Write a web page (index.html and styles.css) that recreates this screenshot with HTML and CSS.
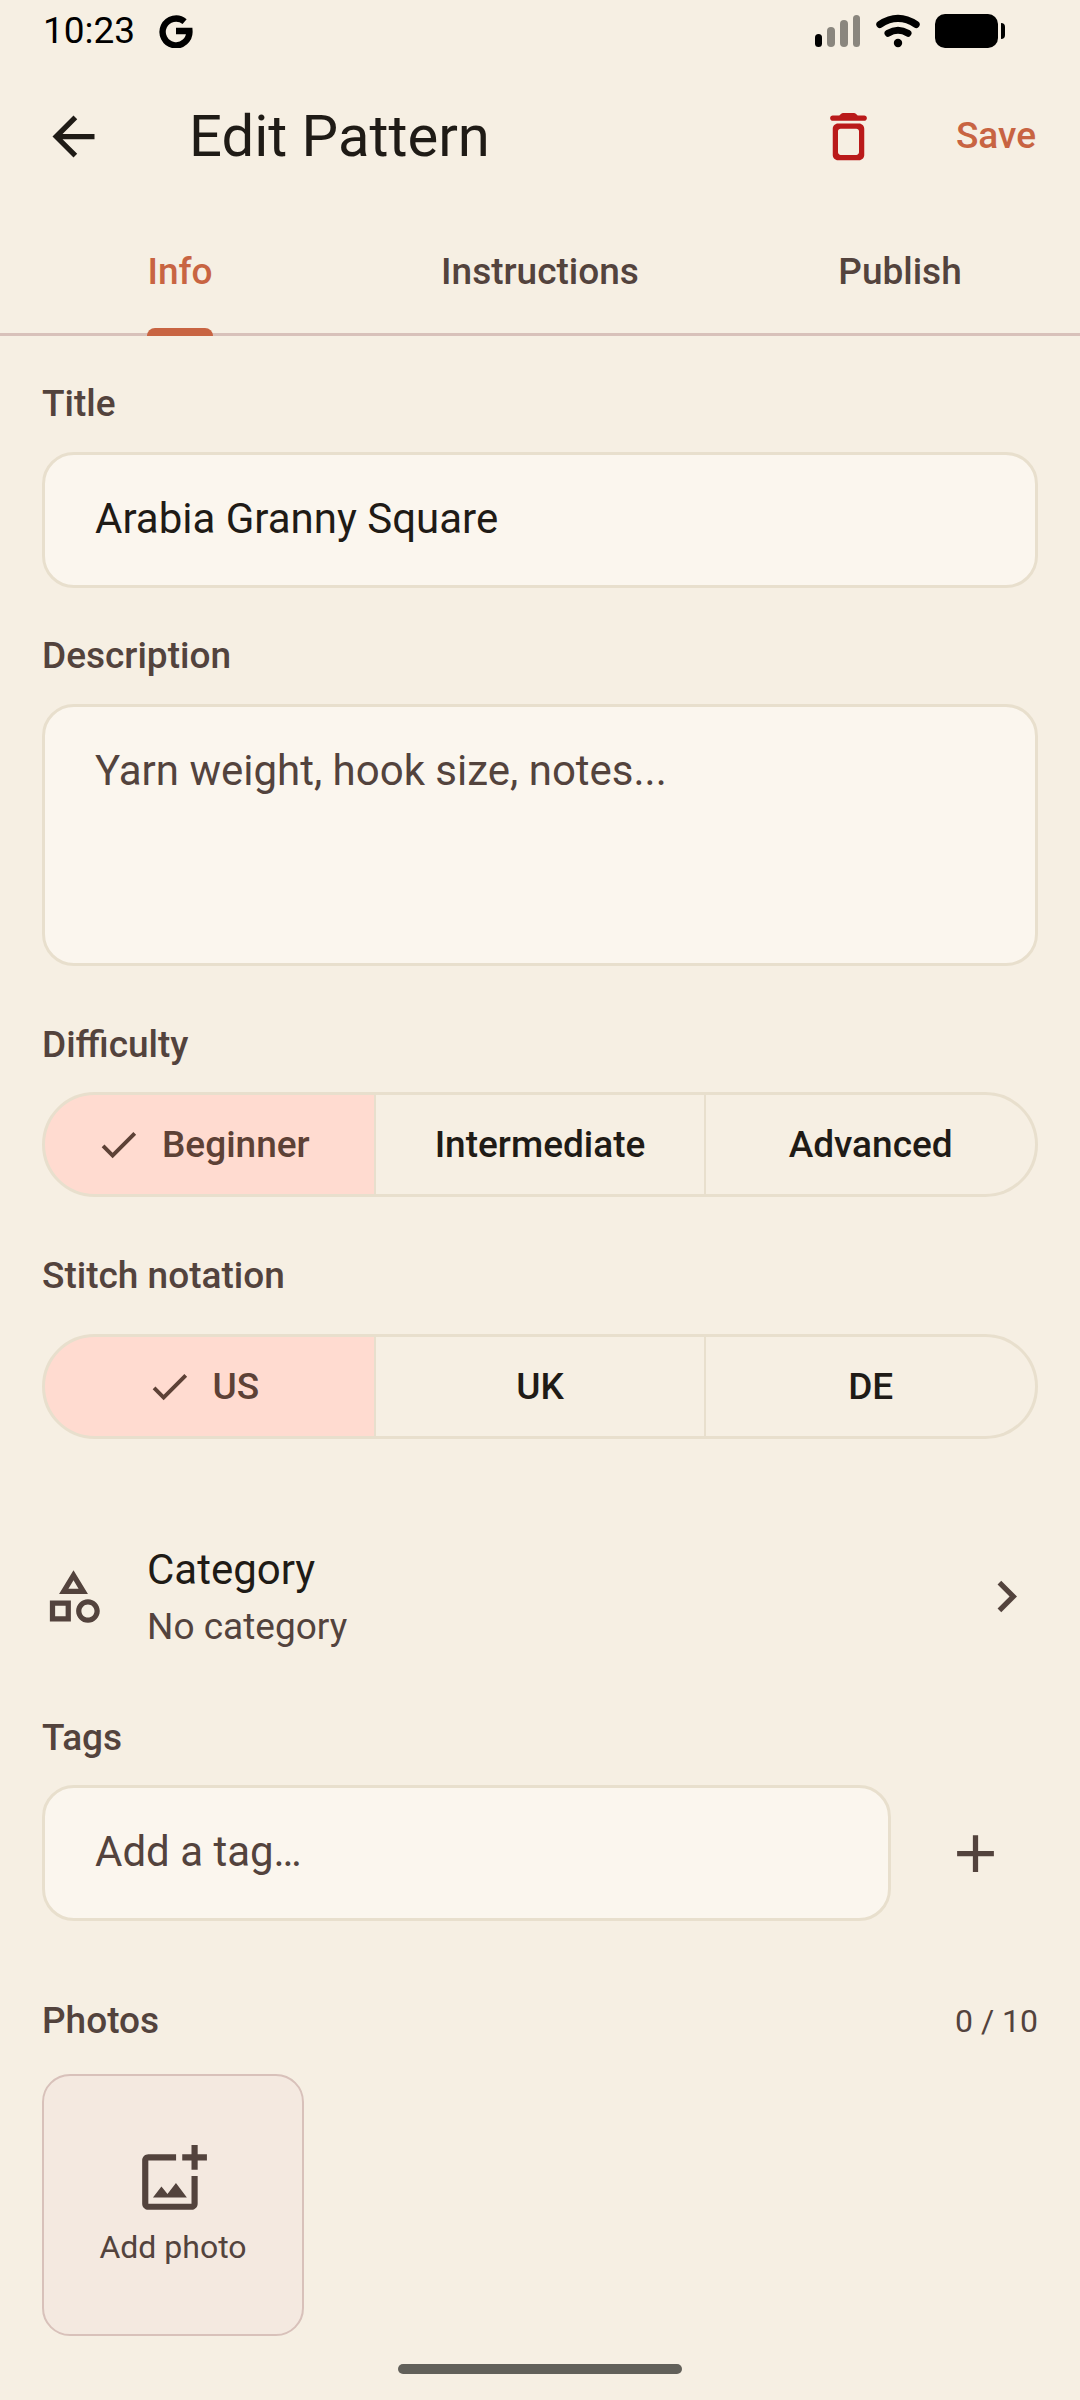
FILE: index.html
```html
<!DOCTYPE html>
<html lang="en">
<head>
<meta charset="utf-8">
<meta name="viewport" content="width=device-width, initial-scale=1">
<title>Edit Pattern</title>
<link rel="stylesheet" href="styles.css">
</head>
<body>
<div class="screen">
  <div class="status-bar">
    <span class="status-time">10:23</span>
    <svg class="status-g" viewBox="0 0 34 34" aria-hidden="true"><path d="M25.6 7.6A13.4 13.4 0 1 0 30.4 17H17" fill="none" stroke="#000" stroke-width="6.4"/></svg>
    <div class="status-icons">
      <svg class="signal" viewBox="0 0 46 34" aria-hidden="true">
        <rect x="0" y="20" width="7" height="13" rx="3.5"/>
        <g fill="#8a867e"><rect x="12" y="13" width="8" height="20" rx="4"/><rect x="25" y="6" width="8" height="27" rx="4"/><rect x="38" y="1" width="7" height="32" rx="3.5"/></g>
      </svg>
      <svg class="wifi" viewBox="0 0 44 34" aria-hidden="true">
        <path d="M3.8 10.5Q22 -1.8 40.2 10.5M12 19.2Q22 13.2 32 19.2" fill="none" stroke="#000" stroke-width="7" stroke-linecap="round"/>
        <circle cx="22" cy="29" r="4.2"/>
      </svg>
      <svg class="battery" viewBox="0 0 71 34" aria-hidden="true">
        <rect width="63" height="34" rx="10"/><path d="M66 9q4 0 4 4v8q0 4-4 4z"/>
      </svg>
    </div>
  </div>

  <header class="app-bar">
    <button class="icon-button" type="button" aria-label="Back">
      <svg class="icon" viewBox="0 0 24 24"><path d="M20 11H7.83l5.59-5.59L12 4l-8 8 8 8 1.41-1.41L7.83 13H20v-2z"/></svg>
    </button>
    <h1 class="app-title">Edit Pattern</h1>
    <button class="icon-button delete" type="button" aria-label="Delete">
      <svg class="icon" viewBox="0 0 24 24"><path fill-rule="evenodd" d="M6 19c0 1.100.9 2 2 2h8c1.100 0 2-.9 2-2V9c0-1.100-.9-2-2-2H8c-1.100 0-2 .9-2 2v10zM9 9h6c.55 0 1 .45 1 1v8c0 .55-.45 1-1 1H9c-.55 0-1-.45-1-1v-8c0-.55.45-1 1-1zM15.500 4l-.71-.71c-.18-.18-.44-.29-.7-.29H9.910c-.26 0-.52.11-.7.29L8.500 4H6c-.55 0-1 .45-1 1s.45 1 1 1h12c.55 0 1-.45 1-1s-.45-1-1-1h-2.500z"/></svg>
    </button>
    <button class="save" type="submit" form="pattern-form">Save</button>
  </header>

  <div class="tabs" role="tablist">
    <button class="tab" type="button" role="tab" aria-selected="true"><span class="tab-label">Info</span></button>
    <button class="tab" type="button" role="tab" aria-selected="false"><span class="tab-label">Instructions</span></button>
    <button class="tab" type="button" role="tab" aria-selected="false"><span class="tab-label">Publish</span></button>
  </div>

  <form class="form" id="pattern-form">
    <div class="group">
      <label class="label" for="title">Title</label>
      <input class="field" id="title" type="text" value="Arabia Granny Square">
    </div>

    <div class="group">
      <label class="label" for="description">Description</label>
      <textarea class="field field-area" id="description" placeholder="Yarn weight, hook size, notes..."></textarea>
    </div>

    <fieldset class="group group-choice">
      <legend class="label">Difficulty</legend>
      <div class="segments">
        <label class="segment"><input type="radio" name="difficulty" checked><svg class="check" viewBox="0 0 24 24" aria-hidden="true"><path d="M9 16.170L4.830 12l-1.420 1.410L9 19 21 7l-1.410-1.410z"/></svg>Beginner</label>
        <label class="segment"><input type="radio" name="difficulty"><svg class="check" viewBox="0 0 24 24" aria-hidden="true"><path d="M9 16.170L4.830 12l-1.420 1.410L9 19 21 7l-1.410-1.410z"/></svg>Intermediate</label>
        <label class="segment"><input type="radio" name="difficulty"><svg class="check" viewBox="0 0 24 24" aria-hidden="true"><path d="M9 16.170L4.830 12l-1.420 1.410L9 19 21 7l-1.410-1.410z"/></svg>Advanced</label>
      </div>
    </fieldset>

    <fieldset class="group group-choice group-notation">
      <legend class="label">Stitch notation</legend>
      <div class="segments">
        <label class="segment"><input type="radio" name="notation" checked><svg class="check" viewBox="0 0 24 24" aria-hidden="true"><path d="M9 16.170L4.830 12l-1.420 1.410L9 19 21 7l-1.410-1.410z"/></svg>US</label>
        <label class="segment"><input type="radio" name="notation"><svg class="check" viewBox="0 0 24 24" aria-hidden="true"><path d="M9 16.170L4.830 12l-1.420 1.410L9 19 21 7l-1.410-1.410z"/></svg>UK</label>
        <label class="segment"><input type="radio" name="notation"><svg class="check" viewBox="0 0 24 24" aria-hidden="true"><path d="M9 16.170L4.830 12l-1.420 1.410L9 19 21 7l-1.410-1.410z"/></svg>DE</label>
      </div>
    </fieldset>

    <button class="category" type="button">
      <svg class="icon" viewBox="0 0 24 24" aria-hidden="true"><path d="M12 2l-5.500 9h11L12 2zm0 3.840L13.930 9h-3.870L12 5.840zM17.500 13c-2.490 0-4.500 2.010-4.500 4.500s2.010 4.500 4.500 4.500 4.500-2.010 4.500-4.500-2.010-4.500-4.500-4.500zm0 7c-1.380 0-2.500-1.120-2.500-2.500s1.120-2.500 2.500-2.500 2.500 1.120 2.500 2.500-1.120 2.500-2.500 2.500zM3 21.500h8v-8H3v8zm2-6h4v4H5v-4z"/></svg>
      <span class="category-text">
        <span class="category-name">Category</span>
        <span class="category-value">No category</span>
      </span>
      <svg class="icon" viewBox="0 0 24 24" aria-hidden="true"><path d="M10 6L8.590 7.410 13.170 12l-4.580 4.590L10 18l6-6z"/></svg>
    </button>

    <div class="group group-tags">
      <label class="label" for="tag">Tags</label>
      <div class="tag-row">
        <input class="field" id="tag" type="text" placeholder="Add a tag…">
        <button class="add-tag" type="button" aria-label="Add tag">
          <svg class="icon" viewBox="0 0 24 24"><path d="M19 13h-6v6h-2v-6H5v-2h6V5h2v6h6v2z"/></svg>
        </button>
      </div>
    </div>

    <section class="group group-photos">
      <div class="photos-head">
        <h2 class="label">Photos</h2>
        <span class="count">0 / 10</span>
      </div>
      <button class="add-photo" type="button">
        <svg class="photo-icon" viewBox="0 0 24 24" aria-hidden="true"><path d="M18 20H4V6h9V4H4c-1.100 0-2 .9-2 2v14c0 1.100.9 2 2 2h14c1.100 0 2-.9 2-2v-9h-2v9zm-7.790-3.170l-1.960-2.360L5.500 18h11l-3.540-4.710zM20 4V1h-2v3h-3v2h3v3h2V6h3V4h-3z"/></svg>
        <span>Add photo</span>
      </button>
    </section>
  </form>

  <div class="nav-handle"></div>
</div>
</body>
</html>
```
FILE: styles.css
```css
:root {
  --surface: #f6efe3;
  --field: #fbf6ee;
  --line: #e8dfcd;
  --rose-line: #d8c1ba;
  --ink: #1f1b16;
  --muted: #53433d;
  --accent: #c86442;
  --selected: #ffdbd0;
  --selected-ink: #5d4136;
  --danger: #ba1a1a;
}

* {
  box-sizing: border-box;
}

body {
  margin: 0;
  background: var(--surface);
  color: var(--ink);
  font-family: Roboto, sans-serif;
  font-size: 37px;
  line-height: 52px;
}

button,
input,
textarea {
  font: inherit;
  color: inherit;
}

button {
  margin: 0;
  padding: 0;
  border: 0;
  background: none;
  cursor: pointer;
}

svg {
  display: block;
  flex: none;
  fill: currentColor;
}

.screen {
  display: flex;
  flex-direction: column;
  min-height: 100vh;
}

.status-bar {
  display: flex;
  align-items: center;
  height: 62px;
  padding: 0 74px 0 43px;
  color: #000;
}

.status-g {
  width: 34px;
  height: 34px;
  margin-left: 24px;
}

.status-icons {
  display: flex;
  gap: 15px;
  margin-left: auto;
}

.signal {
  width: 46px;
  height: 34px;
}

.wifi {
  width: 44px;
  height: 34px;
}

.battery {
  width: 71px;
  height: 34px;
}

.app-bar {
  display: flex;
  align-items: center;
  height: 148px;
  padding: 0 44px 0 42px;
}

.icon {
  width: 63px;
  height: 63px;
}

.app-title {
  flex: 1;
  margin: 0 0 0 84px;
  font-size: 58px;
  font-weight: 400;
  line-height: 72px;
}

.delete {
  color: var(--danger);
}

.save {
  margin-left: 76px;
  color: var(--accent);
  font-weight: 500;
}

.tabs {
  display: grid;
  grid-template-columns: repeat(3, 1fr);
  height: 126px;
  border-bottom: 3px solid var(--rose-line);
}

.tab {
  display: flex;
  justify-content: center;
  color: var(--muted);
  font-weight: 500;
}

.tab-label {
  position: relative;
  display: flex;
  align-items: center;
  height: 123px;
}

.tab[aria-selected="true"] {
  color: var(--accent);
}

.tab[aria-selected="true"] .tab-label::after {
  content: "";
  position: absolute;
  right: 0;
  bottom: -3px;
  left: 0;
  height: 8px;
  border-radius: 8px 8px 0 0;
  background: var(--accent);
}

.form {
  display: flex;
  flex-direction: column;
  padding: 0 42px;
}

.group {
  display: flex;
  flex-direction: column;
  min-width: 0;
  margin: 42px 0 0;
  padding: 0;
  border: 0;
}

.label {
  margin: 0 0 22px;
  padding: 0;
  color: var(--muted);
  font-size: 37px;
  font-weight: 500;
  line-height: 52px;
}

.field {
  width: 100%;
  height: 136px;
  margin: 0;
  padding: 0 50px 4px;
  border: 3px solid var(--line);
  border-radius: 32px;
  outline: 0;
  background: var(--field);
  font-size: 42px;
  line-height: 63px;
}

.field::placeholder {
  color: var(--muted);
  opacity: 1;
}

.field-area {
  display: block;
  height: 262px;
  padding: 32px 50px;
  resize: none;
}

.group-choice {
  display: block;
  margin-top: 53px;
}

.group-choice .label,
.group-tags .label {
  margin-bottom: 21px;
}

.group-notation .label {
  margin-bottom: 32px;
}

.segments {
  display: grid;
  grid-template-columns: repeat(3, 1fr);
  gap: 2px;
  height: 105px;
  overflow: hidden;
  border: 3px solid var(--line);
  border-radius: 53px;
  background: var(--line);
}

.segment {
  display: flex;
  align-items: center;
  justify-content: center;
  gap: 20px;
  background: var(--surface);
  font-weight: 500;
  cursor: pointer;
}

.segment input {
  position: absolute;
  opacity: 0;
  pointer-events: none;
}

.check {
  display: none;
  width: 47px;
  height: 47px;
}

.segment:has(:checked) {
  padding-right: 14px;
  background: var(--selected);
  color: var(--selected-ink);
}

.segment:has(:checked) .check {
  display: block;
}

.category {
  display: flex;
  align-items: center;
  gap: 42px;
  height: 189px;
  margin-top: 63px;
  color: var(--muted);
  text-align: left;
}

.category-text {
  display: flex;
  flex: 1;
  flex-direction: column;
  padding-bottom: 3px;
}

.category-name {
  color: var(--ink);
  font-size: 42px;
  line-height: 63px;
}

.group-tags {
  margin-top: 21px;
}

.tag-row {
  display: flex;
  gap: 21px;
}

.tag-row .field {
  flex: 1;
  min-width: 0;
}

.add-tag {
  display: flex;
  align-items: center;
  justify-content: center;
  width: 126px;
  color: var(--muted);
}

.group-photos {
  margin-top: 74px;
}

.photos-head {
  display: flex;
  justify-content: space-between;
  margin-bottom: 27px;
}

.photos-head .label {
  margin: 0;
}

.count {
  color: var(--muted);
  font-size: 32px;
}

.add-photo {
  display: flex;
  flex-direction: column;
  align-items: center;
  justify-content: center;
  gap: 10px;
  width: 262px;
  height: 262px;
  border: 2px solid var(--rose-line);
  border-radius: 28px;
  background: #f4e9e0;
  color: var(--muted);
  font-size: 32px;
  line-height: 42px;
}

.photo-icon {
  width: 74px;
  height: 74px;
}

.nav-handle {
  align-self: center;
  width: 284px;
  height: 10px;
  margin-top: auto;
  margin-bottom: 26px;
  border-radius: 5px;
  background: #62605a;
}
```
